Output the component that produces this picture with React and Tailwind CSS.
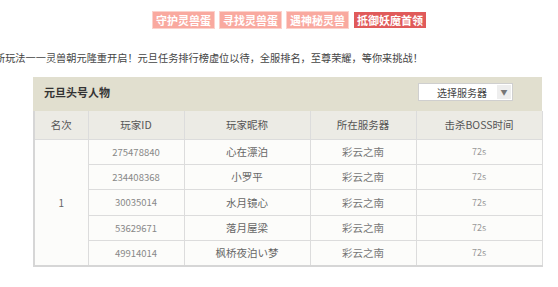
import React from 'react'

const rows = [
  { id: '275478840', name: '心在漂泊', server: '彩云之南', time: '72s' },
  { id: '234408368', name: '小罗平', server: '彩云之南', time: '72s' },
  { id: '30035014', name: '水月镜心', server: '彩云之南', time: '72s' },
  { id: '53629671', name: '落月屋梁', server: '彩云之南', time: '72s' },
  { id: '49914014', name: '枫桥夜泊い梦', server: '彩云之南', time: '72s' },
]

const tabs = ['守护灵兽蛋', '寻找灵兽蛋', '遇神秘灵兽', '抵御妖魔首领']

export default function App() {
  return (
    <div className="w-[558px] h-[287px] bg-white overflow-hidden" style={{ fontFamily: '"Noto Sans CJK SC", "Noto Sans", sans-serif' }}>
      {/* tabs */}
      <div className="flex gap-[6px] pl-[153px] pt-[12px]">
        {tabs.map((t, i) => (
          <div
            key={t}
            className={
              'h-[16px] px-[3px] flex items-center text-[11px] font-bold leading-none text-white ' +
              (i === 3 ? 'bg-[#e05a5a]' : 'bg-[#f9a99f] outline outline-1 outline-[#fcd2cc]')
            }
          >
            {t}
          </div>
        ))}
      </div>

      {/* intro */}
      <div className="mt-[24px] ml-[-5px] text-[10.2px] leading-[12px] text-[#444] whitespace-nowrap">
        新玩法一一灵兽朝元隆重开启！元旦任务排行榜虚位以待，全服排名，至尊荣耀，等你来挑战！
      </div>

      {/* ranking panel */}
      <div className="mt-[13px] ml-[33px] w-[509px]">
        <div className="h-[34px] bg-[#e1dfcf] flex items-start justify-between pl-[11px] pr-[29px]">
          <div className="pt-[7px] text-[11px] font-bold text-[#333]">元旦头号人物</div>
          <div className="mt-[6px] w-[95px] h-[18px] bg-white border border-[#cfcfcf] flex items-center">
            <div className="flex-1 text-center text-[10px] text-[#444] pl-[8px]">选择服务器</div>
            <div className="w-[14px] h-[14px] mr-[1px] bg-[#eeeeee] flex items-center justify-center text-[7px] text-[#777]">▼</div>
          </div>
        </div>
        <table className="w-full border-collapse text-center table-fixed border-l-2 border-b-2 border-l-[#d6d6d6] border-b-[#d6d6d6]">
          <colgroup>
            <col className="w-[54px]" />
            <col className="w-[96px]" />
            <col className="w-[126px]" />
            <col className="w-[106px]" />
            <col className="w-[126px]" />
          </colgroup>
          <thead>
            <tr className="bg-[#ecebe5] text-[10.5px] text-[#555]">
              <th className="h-[28px] p-0 font-normal border border-[#dcdcdc] border-t-0 border-l-0">名次</th>
              <th className="h-[28px] p-0 font-normal border border-[#dcdcdc] border-t-0">玩家ID</th>
              <th className="h-[28px] p-0 font-normal border border-[#dcdcdc] border-t-0">玩家昵称</th>
              <th className="h-[28px] p-0 font-normal border border-[#dcdcdc] border-t-0">所在服务器</th>
              <th className="h-[28px] p-0 font-normal border border-[#dcdcdc] border-t-0">击杀BOSS时间</th>
            </tr>
          </thead>
          <tbody className="bg-[#fcfcfa]">
            {rows.map((r, i) => (
              <tr key={r.id}>
                {i === 0 && (
                  <td rowSpan={5} className="p-0 border border-[#dcdcdc] border-l-0 text-[10px] text-[#666]">1</td>
                )}
                <td className="h-[25.4px] p-0 border border-[#dcdcdc] text-[9.5px] text-[#888]">{r.id}</td>
                <td className="h-[25.4px] p-0 border border-[#dcdcdc] text-[10.5px] text-[#666]">{r.name}</td>
                <td className="h-[25.4px] p-0 border border-[#dcdcdc] text-[10.5px] text-[#777]">{r.server}</td>
                <td className="h-[25.4px] p-0 border border-[#dcdcdc] text-[9px] text-[#999]">{r.time}</td>
              </tr>
            ))}
          </tbody>
        </table>
      </div>
    </div>
  )
}
